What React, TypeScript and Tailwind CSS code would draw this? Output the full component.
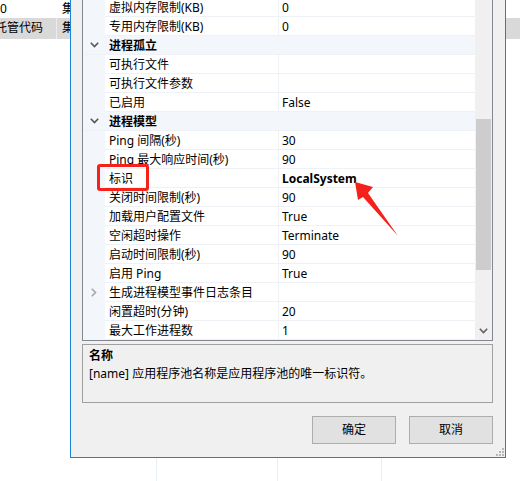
type Row = { name?: string; cat?: string; value?: string; bold?: boolean; expand?: boolean }

const ROWS: Row[] = [
  { name: '虚拟内存限制(KB)', value: '0' },
  { name: '专用内存限制(KB)', value: '0' },
  { cat: '进程孤立' },
  { name: '可执行文件', value: '' },
  { name: '可执行文件参数', value: '' },
  { name: '已启用', value: 'False' },
  { cat: '进程模型' },
  { name: 'Ping 间隔(秒)', value: '30' },
  { name: 'Ping 最大响应时间(秒)', value: '90' },
  { name: '标识', value: 'LocalSystem', bold: true },
  { name: '关闭时间限制(秒)', value: '90' },
  { name: '加载用户配置文件', value: 'True' },
  { name: '空闲超时操作', value: 'Terminate' },
  { name: '启动时间限制(秒)', value: '90' },
  { name: '启用 Ping', value: 'True' },
  { name: '生成进程模型事件日志条目', value: '', expand: true },
  { name: '闲置超时(分钟)', value: '20' },
  { name: '最大工作进程数', value: '1' },
]

function ChevronDown({ color = '#555' }: { color?: string }) {
  return (
    <svg width="9" height="6" viewBox="0 0 9 6" className="block">
      <path d="M0.8 0.8 L4.5 4.5 L8.2 0.8" fill="none" stroke={color} strokeWidth="1.6" />
    </svg>
  )
}

function ChevronRight() {
  return (
    <svg width="6" height="9" viewBox="0 0 6 9" className="block">
      <path d="M0.8 0.8 L4.5 4.5 L0.8 8.2" fill="none" stroke="#a6a6a6" strokeWidth="1.6" />
    </svg>
  )
}

function PropRow({ row }: { row: Row }) {
  if (row.cat) {
    return (
      <div className="flex h-[19px] bg-[#f3f6fb] border-b border-[#eef1f6]">
        <div className="w-[22px] flex items-center justify-center">
          <ChevronDown />
        </div>
        <div className="pl-[4px] leading-[19px] font-bold text-black">{row.cat}</div>
      </div>
    )
  }
  return (
    <div className="flex h-[19px]">
      <div className="w-[22px] bg-[#f3f6fb] flex items-center justify-center">
        {row.expand && <ChevronRight />}
      </div>
      <div className="flex flex-1 border-b border-[#eef1f6] bg-white">
        <div className="w-[174px] pl-[4px] leading-[19px] text-black whitespace-nowrap border-r border-[#eef1f6]">
          {row.name}
        </div>
        <div className={`flex-1 pl-[3px] leading-[19px] text-black whitespace-nowrap ${row.bold ? 'font-bold' : ''}`}>
          {row.value}
        </div>
      </div>
    </div>
  )
}

export default function App() {
  return (
    <div className="relative w-[520px] h-[481px] overflow-hidden bg-white text-[12px] font-['Noto_Sans','Noto_Sans_CJK_SC',sans-serif]">
      {/* list view behind the dialog */}
      <div className="flex flex-col h-full">
        <div className="flex h-[18px] leading-[18px]">
          <div className="w-[57px] border-r border-white">0</div>
          <div className="w-[100px] pl-[5px] border-r border-[#eaf1fb]">集</div>
          <div className="flex-1" />
        </div>
        <div className="flex h-[21px] leading-[20px] bg-[#d9d9d9]">
          <div className="w-[57px] border-r border-[#ececec] overflow-hidden whitespace-nowrap">
            <span className="-ml-[5px] inline-block">托管代码</span>
          </div>
          <div className="w-[100px] pl-[5px]">集</div>
          <div className="flex-1" />
        </div>
        <div className="flex flex-1">
          <div className="w-[57px]" />
          <div className="w-[100px] border-r border-[#e8eff9]" />
          <div className="w-[121px] border-r border-[#e8eff9]" />
          <div className="w-[104px] border-r border-[#e8eff9]" />
          <div className="flex-1" />
        </div>
      </div>

      {/* dialog window */}
      <div className="absolute left-[70px] top-0 w-[436px] h-[458px] bg-[#f0f0f0] border-l border-r border-b border-[#1883d7] flex flex-col pl-[11px] pr-[12px]">
        <div className="h-[341px] flex border-l border-r border-b border-[#828790] bg-white">
          <div className="flex-1 overflow-hidden">
            <div className="-mt-[2px]">
              {ROWS.map((r, i) => (
                <PropRow key={i} row={r} />
              ))}
            </div>
          </div>
          <div className="w-[17px] bg-[#f0f0f0] flex flex-col">
            <div className="h-[119px]" />
            <div className="h-[151px] mx-px bg-[#cdcdcd]" />
            <div className="flex-1" />
            <div className="h-[17px] flex items-center justify-center pb-[1px]">
              <ChevronDown color="#606060" />
            </div>
          </div>
        </div>

        <div className="mt-[3px] h-[59px] border border-[#a0a0a0] px-[6px] pt-[2px] text-black">
          <div className="font-bold leading-[18px]">名称</div>
          <div className="leading-[18px]">[name] 应用程序池名称是应用程序池的唯一标识符。</div>
        </div>

        <div className="mt-[13px] flex justify-end gap-[13px]">
          <button className="w-[84px] h-[28px] bg-[#e1e1e1] border border-[#adadad] text-black">确定</button>
          <button className="w-[84px] h-[28px] bg-[#e1e1e1] border border-[#adadad] text-black">取消</button>
        </div>

        {/* resize grip */}
        <svg width="8" height="8" viewBox="0 0 8 8" className="absolute right-[1px] bottom-[1px]">
          <rect x="6" y="0" width="2" height="2" fill="#b8b8b8" />
          <rect x="3" y="3" width="2" height="2" fill="#b8b8b8" />
          <rect x="6" y="3" width="2" height="2" fill="#b8b8b8" />
          <rect x="0" y="6" width="2" height="2" fill="#b8b8b8" />
          <rect x="3" y="6" width="2" height="2" fill="#b8b8b8" />
          <rect x="6" y="6" width="2" height="2" fill="#b8b8b8" />
        </svg>
      </div>

      {/* annotation: red box */}
      <div className="absolute left-[97px] top-[164px] w-[52px] h-[27px] border-[3px] border-[#f5221b] rounded-[3px]" />

      {/* annotation: red arrow */}
      <svg width="520" height="481" className="absolute left-0 top-0 pointer-events-none">
        <polygon
          points="355,182 373,187 368,193 398,236 363,197 358,200"
          fill="#f5221b"
        />
      </svg>
    </div>
  )
}
